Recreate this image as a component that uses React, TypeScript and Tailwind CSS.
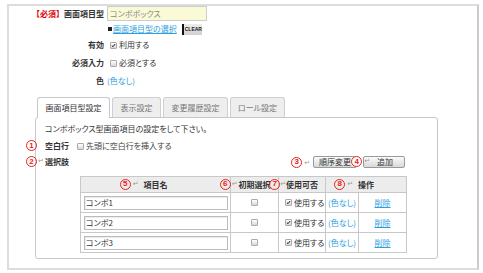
import React from "react";

const Num = ({ n }: { n: string }) => (
  <span className="inline-flex items-center justify-center w-[11px] h-[11px] rounded-full border-[1.5px] border-[#e8231a] text-[#e8231a] text-[8px] font-bold leading-none font-['Liberation_Sans',sans-serif] shrink-0">
    {n}
  </span>
);

const Ret = () => (
  <span className="text-[#999] text-[7px] leading-none font-['DejaVu_Sans',sans-serif] font-normal">↵</span>
);

const Box = ({ checked }: { checked?: boolean }) => (
  <span className="inline-flex items-center justify-center w-[7px] h-[7px] border border-[#aaa] rounded-[1px] bg-gradient-to-b from-[#ffffff] to-[#d8d8d8] shrink-0">
    {checked && (
      <svg width="7" height="7" viewBox="0 0 7 7" className="block">
        <path d="M1.2 3.6 L2.8 5.2 L5.8 1.4" stroke="#111" strokeWidth="1.3" fill="none" />
      </svg>
    )}
  </span>
);

const Tab = ({ label, w, active }: { label: string; w: string; active?: boolean }) => (
  <div
    className={
      active
        ? `${w} h-[21px] -mb-px bg-white border border-[#c8c8c8] border-b-0 rounded-t-[3px] flex items-center justify-center text-[#333] pb-px`
        : `${w} h-[20px] bg-[#eeeeee] border border-[#cfcfcf] border-b-0 rounded-t-[3px] flex items-center justify-center text-[#777]`
    }
  >
    {label}
  </div>
);

const rows = ["コンボ1", "コンボ2", "コンボ3"];

export default function App() {
  return (
    <div className="w-[483px] h-[273px] bg-white pt-[4px] pl-[7px] text-[8px] leading-none text-[#333] font-['Noto_Sans_CJK_JP',sans-serif] [font-feature-settings:'palt']">
      <div className="w-[472px] h-[266px] border-2 border-[#dddddd] border-r-[#cccccc] flex flex-col">
        {/* top form */}
        <div className="grid grid-cols-[95px_1fr] gap-x-[3px]">
          <div className="h-[15px] flex items-center justify-end font-bold">
            <span className="text-[#e00000] [font-feature-settings:normal]">【必須】</span>
            <span>画面項目型</span>
          </div>
          <div className="h-[15px] flex items-center">
            <div className="w-[100px] h-[15px] border border-[#cccccc] bg-[#fafad6] flex items-center pl-[2px] text-[#888]">
              コンボボックス
            </div>
          </div>

          <div className="h-[12px] mt-[2px]" />
          <div className="h-[12px] mt-[2px] flex items-center">
            <span className="ml-[1px] w-[4px] h-[4px] bg-[#222] shrink-0" />
            <span className="ml-[1px] text-[#2b9ee0] underline">画面項目型の選択</span>
            <span className="ml-[5px] h-[11px] w-[20px] flex items-center bg-gradient-to-b from-[#eeeeee] to-[#cfcfcf] border-l-2 border-[#111] text-[5px] font-bold text-[#222] font-['Liberation_Sans',sans-serif] pl-[1px]">
              CLEAR
            </span>
          </div>

          <div className="h-[18px] mt-[1px] flex items-center justify-end font-bold">有効</div>
          <div className="h-[18px] mt-[1px] flex items-center gap-[2px] pl-[3px]">
            <Box checked />
            <span>利用する</span>
          </div>

          <div className="h-[18px] flex items-center justify-end font-bold">必須入力</div>
          <div className="h-[18px] flex items-center gap-[2px] pl-[3px]">
            <Box />
            <span>必須とする</span>
          </div>

          <div className="h-[18px] flex items-center justify-end font-bold">色</div>
          <div className="h-[18px] flex items-center text-[#2b9ee0]">(色なし)</div>
        </div>

        {/* tabs */}
        <div className="mt-[7px] ml-[26px] w-[403px]">
          <div className="flex items-end gap-[2px] pl-[2px] h-[20px] relative z-10">
            <Tab label="画面項目型設定" w="w-[73px]" active />
            <Tab label="表示設定" w="w-[49px]" />
            <Tab label="変更履歴設定" w="w-[65px]" />
            <Tab label="ロール設定" w="w-[55px]" />
          </div>
          <div className="w-[403px] h-[142px] border border-[#c8c8c8] rounded-[3px] flex flex-col">
            <div className="mt-[4px] h-[13px] pl-[9px] flex items-center">
              コンボボックス型画面項目の設定をして下さい。
            </div>
            <div className="mt-[4px] h-[14px] pl-[9px] flex items-center relative">
              <span className="absolute left-[-10px] top-[1px]">
                <Num n="1" />
              </span>
              <span className="font-bold">空白行</span>
              <span className="ml-[8px] flex items-center gap-[2px]">
                <Box />
                <span className="text-[#444]">先頭に空白行を挿入する</span>
              </span>
            </div>
            <div className="mt-[2px] h-[14px] pl-[9px] pr-[32px] flex items-center justify-between relative">
              <span className="absolute left-[-10px] top-[1px] flex items-center gap-[1px]">
                <Num n="2" />
                <Ret />
              </span>
              <span className="font-bold">選択肢</span>
              <div className="flex items-center relative">
                <Num n="3" />
                <span className="ml-[2px]">
                  <Ret />
                </span>
                <button className="ml-[3px] w-[44px] h-[12px] border border-[#9a9a9a] rounded-[2px] bg-gradient-to-b from-[#fbfbfb] to-[#d9d9d9] text-[8px] leading-none text-[#333] flex items-center justify-center">
                  順序変更
                </button>
                <button className="ml-[6px] w-[42px] h-[12px] border border-[#9a9a9a] rounded-[2px] bg-gradient-to-b from-[#fbfbfb] to-[#d9d9d9] text-[8px] leading-none text-[#333] flex items-center justify-center pl-[2px]">
                  追加
                </button>
                <span className="absolute left-[60px] top-[0px] flex items-center gap-[2px]">
                  <span className="bg-white rounded-full">
                    <Num n="4" />
                  </span>
                  <Ret />
                </span>
              </div>
            </div>

            <table className="mt-[7px] ml-[44px] w-[326px] table-fixed border-collapse border border-[#c8c8c8]">
              <colgroup>
                <col className="w-[150px]" />
                <col className="w-[48px]" />
                <col className="w-[47px]" />
                <col className="w-[33px]" />
                <col className="w-[48px]" />
              </colgroup>
              <thead>
                <tr className="h-[16px] bg-[#ececec] font-bold">
                  <th className="border border-[#c8c8c8] p-0 text-center">
                    <span className="relative inline-block">
                      項目名
                      <span className="absolute right-full mr-[5px] top-[-2px] flex items-center gap-[2px]">
                        <Num n="5" />
                        <Ret />
                      </span>
                    </span>
                  </th>
                  <th className="border border-[#c8c8c8] p-0 text-center">
                    <span className="relative inline-block">
                      初期選択
                      <span className="absolute right-full mr-[1px] top-[-2px] flex items-center gap-[1px]">
                        <Num n="6" />
                        <Ret />
                      </span>
                    </span>
                  </th>
                  <th className="border border-[#c8c8c8] p-0 text-center">
                    <span className="relative inline-block">
                      使用可否
                      <span className="absolute right-full mr-0 top-[-2px] flex items-center">
                        <Num n="7" />
                        <Ret />
                      </span>
                    </span>
                  </th>
                  <th colSpan={2} className="border border-[#c8c8c8] p-0 text-center">
                    <span className="relative inline-block">
                      操作
                      <span className="absolute right-full mr-[5px] top-[-2px] flex items-center gap-[2px]">
                        <Num n="8" />
                        <Ret />
                      </span>
                    </span>
                  </th>
                </tr>
              </thead>
              <tbody>
                {rows.map((r) => (
                  <tr key={r} className="h-[20px]">
                    <td className="border border-[#c8c8c8] p-0 pl-[3px] pr-[2px]">
                      <div className="h-[14px] border border-[#bbbbbb] shadow-[inset_1px_1px_1px_rgba(0,0,0,0.08)] bg-white flex items-center pl-[1px] text-[#333]">
                        {r}
                      </div>
                    </td>
                    <td className="border border-[#c8c8c8] p-0">
                      <div className="flex justify-center">
                        <Box />
                      </div>
                    </td>
                    <td className="border border-[#c8c8c8] p-0 pl-[6px]">
                      <div className="flex items-center gap-[2px]">
                        <Box checked />
                        <span>使用する</span>
                      </div>
                    </td>
                    <td className="border border-[#c8c8c8] p-0 pl-[2px] text-[#2b9ee0] whitespace-nowrap">
                      (色なし)
                    </td>
                    <td className="border border-[#c8c8c8] p-0 text-center">
                      <span className="text-[#2b9ee0] underline">削除</span>
                    </td>
                  </tr>
                ))}
              </tbody>
            </table>
          </div>
        </div>
      </div>
    </div>
  );
}
